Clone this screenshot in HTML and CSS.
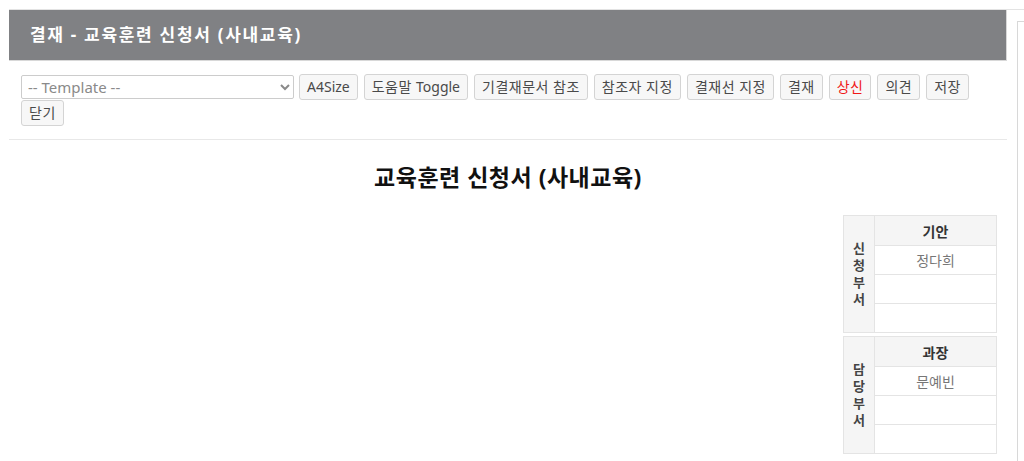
FILE: index.html
```html
<!DOCTYPE html>
<html lang="ko">
<head>
    <meta charset="UTF-8">
    <title>결재 - 교육훈련 신청서 (사내교육)</title>
    <link rel="stylesheet" href="styles.css">
</head>
<body>
    <div class="page">
        <div class="main">
            <div class="header">결재 - 교육훈련 신청서 (사내교육)</div>
            <div class="toolbar">
                <select class="template">
                    <option>-- Template --</option>
                </select>
                <button class="btn"><span class="latin">A4Size</span></button>
                <button class="btn">도움말 <span class="latin">Toggle</span></button>
                <button class="btn">기결재문서 참조</button>
                <button class="btn">참조자 지정</button>
                <button class="btn">결재선 지정</button>
                <button class="btn">결재</button>
                <button class="btn btn-red">상신</button>
                <button class="btn">의견</button>
                <button class="btn">저장</button>
                <button class="btn">닫기</button>
            </div>
            <h1 class="doc-title">교육훈련 신청서 (사내교육)</h1>
            <div class="approvals">
                <table class="approval">
                    <tr>
                        <th class="dept" rowspan="4"><span>신</span><span>청</span><span>부</span><span>서</span></th>
                        <th class="role">기안</th>
                    </tr>
                    <tr><td class="name">정다희</td></tr>
                    <tr><td></td></tr>
                    <tr><td></td></tr>
                </table>
                <table class="approval">
                    <tr>
                        <th class="dept" rowspan="4"><span>담</span><span>당</span><span>부</span><span>서</span></th>
                        <th class="role">과장</th>
                    </tr>
                    <tr><td class="name">문예빈</td></tr>
                    <tr><td></td></tr>
                    <tr><td></td></tr>
                </table>
            </div>
        </div>
        <div class="side"></div>
    </div>
</body>
</html>
```

FILE: styles.css
```css
body {
    margin: 0;
    background: #fff;
    font-family: "Noto Sans", "Noto Sans CJK KR", sans-serif;
    color: #333;
}

.page {
    display: flex;
    margin: 9px 0 0 9px;
    border-top: 1px solid #e3e3e3;
    height: 451px;
    overflow: hidden;
}

.main {
    width: 998px;
    flex-shrink: 0;
}

.header {
    height: 51px;
    line-height: 50px;
    background-color: #808184;
    border-right: 1px solid #d8d8d8;
    border-bottom: 1px solid #d8d8d8;
    box-sizing: border-box;
    color: #fff;
    font-size: 17px;
    font-weight: 700;
    letter-spacing: 1.7px;
    padding-left: 21px;
}

.toolbar {
    padding: 13px 12px 13px 12px;
    border-bottom: 1px solid #e8e8e8;
    font-size: 0;
    line-height: 0;
}

.template {
    width: 273px;
    height: 24px;
    margin: 1px 5px 1px 0;
    padding: 0 2px;
    border: 1px solid #ccc;
    border-radius: 2px;
    background: #fff;
    color: #8a8a8a;
    font-family: "Noto Sans", "Noto Sans CJK KR", sans-serif;
    font-size: 15px;
    vertical-align: top;
}

.btn {
    height: 26px;
    margin: 0 6px 0 0;
    padding: 0 7px;
    border: 1px solid #d4d4d4;
    border-radius: 3px;
    background-color: #f7f7f7;
    color: #4a4a4a;
    font-family: "Noto Sans", "Noto Sans CJK KR", sans-serif;
    font-size: 14px;
    letter-spacing: 0.5px;
    line-height: 24px;
    vertical-align: top;
    cursor: pointer;
}

.btn .latin {
    letter-spacing: 0;
}

.btn-red {
    color: #f01818;
}

.doc-title {
    margin: 20px 0 0;
    text-align: center;
    font-size: 23px;
    font-weight: 700;
    letter-spacing: 0.5px;
    color: #111;
    line-height: 34px;
}

.approvals {
    display: flex;
    flex-direction: column;
    align-items: flex-end;
    gap: 3px;
    margin: 21px 10px 0 0;
}

.approval {
    width: 154px;
    border-collapse: collapse;
    font-size: 14px;
}

.approval th,
.approval td {
    border: 1px solid #e4e4e4;
    height: 28px;
    padding: 0;
    text-align: center;
}

.approval .role {
    height: 29px;
    background-color: #f5f5f5;
    color: #333;
    font-weight: 700;
}

.approval .dept {
    width: 30px;
    background-color: #f5f5f5;
    color: #444;
    font-size: 13px;
    font-weight: 700;
}

.approval .dept span {
    display: block;
    line-height: 17px;
}

.approval .name {
    color: #777;
}

.side {
    flex: 1;
    margin: 11px 0 0 10px;
    border-left: 1px solid #d8d8d8;
    border-top: 1px solid #d8d8d8;
}
```
